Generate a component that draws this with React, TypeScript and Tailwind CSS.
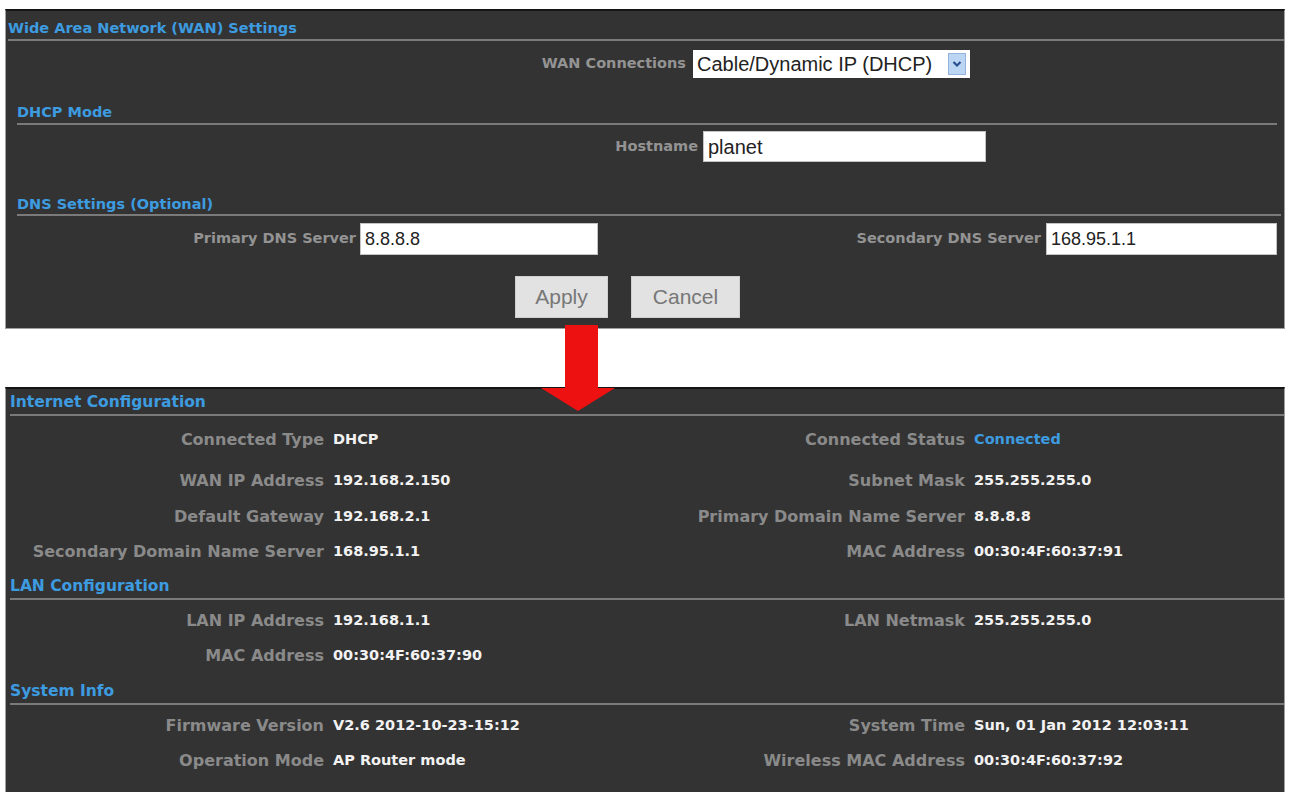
import React from "react";

const dejavu = "font-['DejaVu_Sans',sans-serif] font-bold";
const topLabel = `${dejavu} text-[14.5px] text-[#939393] text-right`;
const label = `${dejavu} text-[16px] text-[#8a8a8a] text-right`;
const value = `${dejavu} text-[14.5px] text-[#f2f2f2]`;
const headText = `${dejavu} text-[#3d9be0]`;
const inputBox = "bg-white flex items-center pl-[4px] font-['Liberation_Sans',sans-serif] text-[#222] border border-[#c4c4c4]";

function SectionHead({ title, size, h, className }: { title: string; size: string; h: string; className?: string }) {
  return (
    <div className={className}>
      <div className={`${headText} ${size} ${h} flex items-center`}>{title}</div>
      <div className="h-[2px] bg-[#7a7a7a]" />
    </div>
  );
}

type Pair = [string, string, boolean?];

function InfoRow({ left, right, h }: { left?: Pair; right?: Pair; h: string }) {
  return (
    <div className={`flex items-center pt-[5px] ${h}`}>
      <div className="w-[640px] flex items-center">
        <div className={`${label} w-[318px]`}>{left?.[0]}</div>
        <div className={`${value} pl-[9px]`}>{left?.[1]}</div>
      </div>
      <div className="w-[640px] flex items-center">
        <div className={`${label} w-[320px]`}>{right?.[0]}</div>
        <div className={`${value} pl-[9px] ${right?.[2] ? "!text-[#3d9be0]" : ""}`}>{right?.[1]}</div>
      </div>
    </div>
  );
}

export default function App() {
  return (
    <div className="relative w-[1290px] h-[792px] bg-white overflow-hidden">
      <div className="pt-[9px] px-[5px]">
        {/* WAN settings panel */}
        <div className="bg-[#333333] border border-[#a0a0a0] border-t-[2px] border-t-[#151515] h-[320px] flex flex-col">
          <SectionHead
            title="Wide Area Network (WAN) Settings"
            size="text-[14.5px]"
            h="h-[25px] pt-[5px]"
            className="mt-[3px] pl-[2px]"
          />
          <div className="flex items-center mt-[9px] h-[28px]">
            <div className={`${topLabel} w-[680px]`}>WAN Connections</div>
            <div className="ml-[7px] bg-white w-[277px] h-[28px] flex items-center justify-between pl-[4px] pr-[4px] font-['Liberation_Sans',sans-serif] text-[20px] text-[#222]">
              <span>Cable/Dynamic IP (DHCP)</span>
              <span className="w-[18px] h-[22px] bg-[#bcd5f2] border border-[#93b4dc] flex items-center justify-center">
                <svg width="10" height="8" viewBox="0 0 10 8">
                  <path d="M1.5 2 L5 5.5 L8.5 2" stroke="#2a4f8f" strokeWidth="2.2" fill="none" />
                </svg>
              </span>
            </div>
          </div>
          <SectionHead
            title="DHCP Mode"
            size="text-[14.5px]"
            h="h-[25px] pt-[4px]"
            className="mt-[20px] pl-[11px] pr-[7px]"
          />
          <div className="flex items-center mt-[6px] h-[31px]">
            <div className={`${topLabel} w-[692px]`}>Hostname</div>
            <div className={`${inputBox} ml-[5px] w-[283px] h-[31px] text-[20px]`}>planet</div>
          </div>
          <SectionHead
            title="DNS Settings (Optional)"
            size="text-[14.5px]"
            h="h-[24px] pt-[5px]"
            className="mt-[28px] pl-[11px] pr-[3px]"
          />
          <div className="flex items-center mt-[7px] h-[32px]">
            <div className={`${topLabel} w-[350px]`}>Primary DNS Server</div>
            <div className={`${inputBox} ml-[4px] w-[238px] h-[32px] text-[18px]`}>8.8.8.8</div>
            <div className={`${topLabel} w-[443px]`}>Secondary DNS Server</div>
            <div className={`${inputBox} ml-[5px] w-[231px] h-[32px] text-[18px]`}>168.95.1.1</div>
          </div>
          <div className="flex gap-[23px] mt-[21px] ml-[509px]">
            <button className="w-[93px] h-[42px] bg-[#e2e2e2] border border-[#d0d0d0] font-['Liberation_Sans',sans-serif] text-[21px] text-[#777]">
              Apply
            </button>
            <button className="w-[109px] h-[42px] bg-[#e2e2e2] border border-[#d0d0d0] font-['Liberation_Sans',sans-serif] text-[21px] text-[#777]">
              Cancel
            </button>
          </div>
        </div>

        <div className="h-[58px]" />

        {/* Status panel */}
        <div className="bg-[#333333] border-l border-r border-[#a0a0a0] border-t-[2px] border-t-[#151515] h-[406px] flex flex-col">
          <SectionHead title="Internet Configuration" size="text-[15.5px]" h="h-[25px] pt-[3px]" className="pl-[4px]" />
          <InfoRow h="h-[43px]" left={["Connected Type", "DHCP"]} right={["Connected Status", "Connected", true]} />
          <InfoRow h="h-[38px]" left={["WAN IP Address", "192.168.2.150"]} right={["Subnet Mask", "255.255.255.0"]} />
          <InfoRow h="h-[35px]" left={["Default Gateway", "192.168.2.1"]} right={["Primary Domain Name Server", "8.8.8.8"]} />
          <InfoRow h="h-[35px]" left={["Secondary Domain Name Server", "168.95.1.1"]} right={["MAC Address", "00:30:4F:60:37:91"]} />
          <SectionHead title="LAN Configuration" size="text-[15.5px]" h="h-[26px] pt-[4px]" className="mt-[5px] pl-[4px]" />
          <InfoRow h="h-[36px]" left={["LAN IP Address", "192.168.1.1"]} right={["LAN Netmask", "255.255.255.0"]} />
          <InfoRow h="h-[35px]" left={["MAC Address", "00:30:4F:60:37:90"]} />
          <SectionHead title="System Info" size="text-[15.5px]" h="h-[26px] pt-[4px]" className="mt-[6px] pl-[4px]" />
          <InfoRow h="h-[36px]" left={["Firmware Version", "V2.6 2012-10-23-15:12"]} right={["System Time", "Sun, 01 Jan 2012 12:03:11"]} />
          <InfoRow h="h-[35px]" left={["Operation Mode", "AP Router mode"]} right={["Wireless MAC Address", "00:30:4F:60:37:92"]} />
        </div>
      </div>

      {/* red arrow overlay */}
      <svg className="absolute left-[538px] top-[325px]" width="80" height="88" viewBox="0 0 80 88">
        <polygon points="27,0 60,0 60,63 77,63 40,86 3,63 27,63" fill="#ee1111" />
      </svg>
    </div>
  );
}
